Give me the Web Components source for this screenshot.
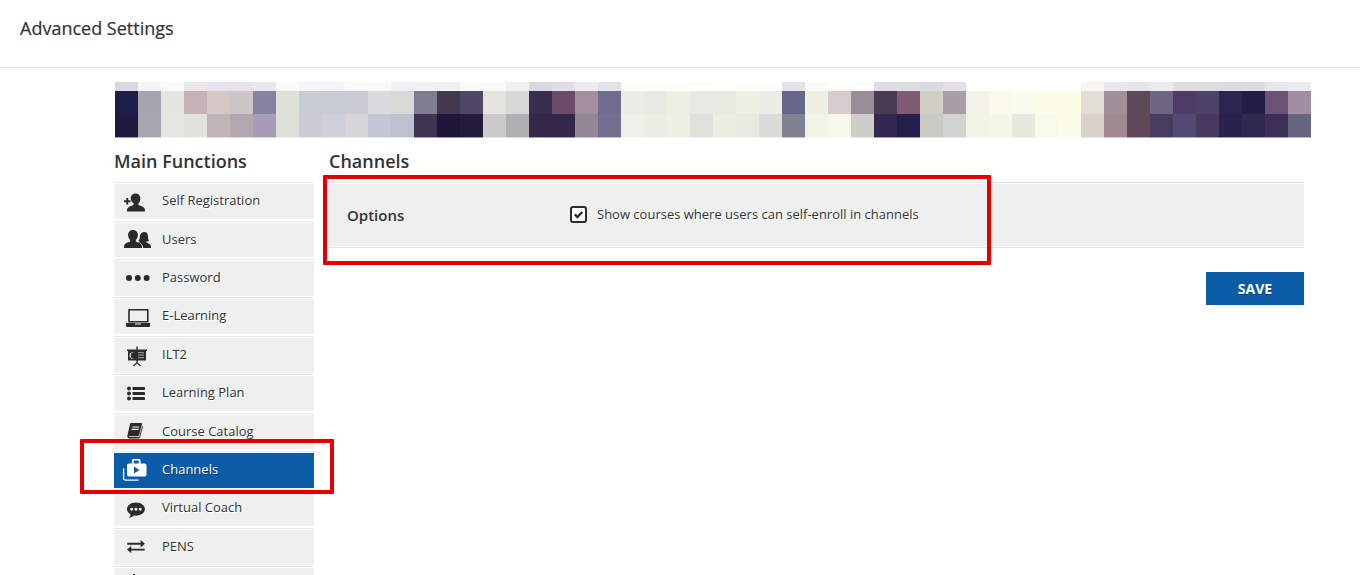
<!DOCTYPE html>
<html>
<head>
<meta charset="utf-8">
<title>Advanced Settings</title>
<style>
  html, body { margin: 0; padding: 0; background: #fff; }
  body { height: 575px; overflow: hidden; position: relative; font-family: "Open Sans", "Liberation Sans", sans-serif; color: #333; }
</style>
</head>
<body>

<page-header>Advanced Settings</page-header>
<mosaic-strip></mosaic-strip>
<settings-layout>
  <side-menu slot="side" heading="Main Functions">
    <menu-item icon="selfreg">Self Registration</menu-item>
    <menu-item icon="users">Users</menu-item>
    <menu-item icon="password">Password</menu-item>
    <menu-item icon="elearning">E-Learning</menu-item>
    <menu-item icon="ilt">ILT2</menu-item>
    <menu-item icon="plan">Learning Plan</menu-item>
    <menu-item icon="catalog">Course Catalog</menu-item>
    <menu-item icon="channels" active>Channels</menu-item>
    <menu-item icon="coach">Virtual Coach</menu-item>
    <menu-item icon="pens">PENS</menu-item>
    <menu-item icon="more"></menu-item>
  </side-menu>
  <channel-panel heading="Channels">
    <option-row label="Options">Show courses where users can self-enroll in channels</option-row>
    <save-button>SAVE</save-button>
  </channel-panel>
</settings-layout>
<red-mark style="left:323px;top:175px;width:668px;height:90px"></red-mark>
<red-mark style="left:80px;top:439px;width:254px;height:55px"></red-mark>

<script>
// 每个图标用 24x24 的 viewBox, 颜色走 currentColor
const ICONS = {
  selfreg: '<path d="M0 10.300h2.300V8h1.900v2.300h2.300v1.900H4.200v2.300H2.300v-2.300H0z"/><path d="M11.500 3.500c3 0 4.900 2.200 4.900 5 0 2.200-.9 3.900-2 4.800v1.700c1.900 1 6.600 1.300 6.600 5.300v1.200H3v-1.200c0-4 4.700-4.300 6.600-5.300v-1.700c-1.100-.9-2.900-2.600-2.900-4.800 0-2.800 1.800-5 4.800-5z"/>',
  users: '<path d="M9 2c3 0 4.900 2.200 4.900 5 0 2.200-.9 3.900-2 4.800v1.700c1.900 1 6.100 1.300 6.100 5.300V20H0v-1.200c0-4 4.200-4.300 6.100-5.300v-1.700c-1.100-.9-2-2.600-2-4.800C4.100 4.200 6 2 9 2z"/><path d="M20.300 4c2.500 0 3.700 1.900 3.700 4 0 2.500.4 3.900 1.200 4.700-.9.600-2 .8-2.900.9v.9c1.100.6 4.700 1.100 4.700 4.300V20h-7.800c-.1-3-2.300-5-4.600-6.100.4-.1.800-.2 1.200-.4V13.600c-.6-.1-1-.3-1.400-.6 1-1 1.500-2.900 1.500-5 .1-2.100 1.900-4 4.400-4z"/>',
  password: '<circle cx="5" cy="12" r="3"/><circle cx="13.800" cy="12" r="3"/><circle cx="22.600" cy="12" r="3"/>',
  elearning: '<path fill-rule="evenodd" d="M5 4h18.800c.5 0 .8.300.8.800V17.500H4.200V4.800c0-.5.300-.8.800-.8zm.8 1.500v10.500h17.200V5.500z"/><path d="M2 18h24.200v2.500c0 .9-.6 1.500-1.500 1.500H3.500C2.600 22 2 21.400 2 20.500zm9 .6v.9h6v-.9z"/>',
  ilt: '<path d="M12.300 3.500h1.400v3H23v1.500h-1v9.500H4V8H3V6.500h9.300z"/><path d="M12.300 17h1.400v2.400l3.800 3.600h-1.900l-2.600-2.500-2.600 2.500H8.500l3.800-3.600z"/><path fill="var(--item-bg)" d="M10 9.300a3.400 3.400 0 1 0 0 6.400 3 3 0 0 1 0-6.400z"/><path fill="var(--item-bg)" opacity=".5" d="M14 9h6v1.200h-6zM14 11.500h6v1.200h-6zM14 14h6v1.200h-6z"/>',
  plan: '<circle cx="5" cy="6.500" r="2"/><circle cx="5" cy="11.500" r="2"/><circle cx="5" cy="16.500" r="2"/><rect x="8.500" y="5.100" width="12.500" height="2.800" rx=".4"/><rect x="8.500" y="10.100" width="12.500" height="2.800" rx=".4"/><rect x="8.500" y="15.100" width="12.500" height="2.800" rx=".4"/>',
  catalog: '<g transform="translate(2.500 2.400) scale(.68)"><path fill-rule="evenodd" d="M7 1h14.500c1 0 1.500.8 1.200 1.800L18.600 19c-.3 1-1 1.500-2 1.500H4.300c-.9 0-1.200.8-.4 1.100h13.600c.8 0 1.400-.5 1.700-1.200l4-15.400.7.600c.4.400.4 1 .2 1.600L20 21.500c-.3 1.200-1.300 2-2.600 2H4.300c-2.200 0-3.600-1.700-3-3.800L5 3c.3-1.100 1-2 2-2zm1.500 5-.4 1.500h10.500L19 6zm-.9 3.500-.4 1.500h10.500l.4-1.500z"/></g>',
  channels: '<path fill-rule="evenodd" d="M9.500 1h5.500c1 0 1.600.6 1.600 1.500v3h3.900c1.200 0 2 .8 2 2v9c0 1.200-.8 2-2 2H5c-1.200 0-2-.8-2-2v-9c0-1.200.8-2 2-2h2.900v-3c0-.9.600-1.500 1.600-1.500zm.2 1.600v2.900h5.100V2.600zM10 8.500v7l5.500-3.500z"/><path fill="none" stroke="#fff" stroke-width="1.300" d="M-.4 10.500v9.800c0 1.200.7 1.800 1.700 1.800h13.200"/>',
  coach: '<g transform="translate(2.600 3.500) scale(.78)"><path fill-rule="evenodd" d="M12 2.500c6.400 0 11.500 3.700 11.500 8.500S18.400 19.500 12 19.500c-.9 0-1.800-.1-2.600-.2-1.700 1.700-3.900 2.600-6.400 2.900 1.200-1.400 2-2.800 2.200-4.300C2.300 16.400.5 13.900.5 11 .5 6.200 5.600 2.500 12 2.500zM6.500 9.300a1.900 1.900 0 1 0 0 3.800 1.900 1.900 0 0 0 0-3.800zm5.500 0a1.900 1.900 0 1 0 0 3.800 1.900 1.900 0 0 0 0-3.800zm5.500 0a1.900 1.900 0 1 0 0 3.800 1.900 1.900 0 0 0 0-3.800z"/></g>',
  pens: '<g transform="translate(2.600 2.300) scale(.78)"><path d="M.8 7h17.200V3.500L23.500 8.200 18 13V9.400H.8z"/><path d="M23.200 14.600H6V11L.5 15.800 6 20.500V17h17.200z"/></g>',
  more: '<path d="M9 0h2v2.500l2 1-1 1.500H8L7 3.500l2-1z"/>'
};

customElements.define('page-header', class extends HTMLElement {
  constructor() {
    super();
    this.attachShadow({ mode: 'open' }).innerHTML = `
      <style>
        :host { display: block; height: 67px; border-bottom: 1px solid #e4e4e4; }
        div { padding: 16px 0 0 20px; font-size: 18px; line-height: 24px; font-weight: 400; color: #333; -webkit-text-stroke: .2px #333; }
      </style>
      <div><slot></slot></div>`;
  }
});

customElements.define('mosaic-strip', class extends HTMLElement {
  constructor() {
    super();
    const rows = [
      'd8d7e3 f5f5f5 f9f9f7 e9e7ec e6e4ea e6e4ea e9e8ef fafaf8 f6f6f8 f4f5f7 f9f9f8 f8f9f8 f1f2f6 f1f1f4 f0f0f3 fafaf8 f9f9f7 f0f0f3 d8d8e2 e1dde4 eeecee e2e2ec fdfdfb fdfdfb fdfdfb fcfcfb fefefa fdfdfb fdfdfb e4e3ec fbfbf9 fefef8 fcfcfa dddbe4 e0dce4 dbdae0 e3e0e6 fefefa fefefa fefefa fefefa fefefa f7f6f5 eae8ea e6e4e8 ebeaef dfdde4 dfdde4 dcdbe4 dbdbe0 e7e6ea ecebee',
      '1e1c48 a5a5ad e5e6df c5b3b6 d3c8c6 cdc5c7 8582a2 dfe0da c8ccd4 c8cdd5 c9cad3 d8dcdc d8dad7 7f7d91 433850 4f4864 e5e5dd d8d8d8 3a2d52 6b4c68 a48f9f 6f6c90 ecede6 e8e9e3 edefe3 e8e9e3 e8e9e1 eef0e4 ecede5 666688 eff0e4 d9cccc 9a8e9b 4a3b55 7f5c72 d0cec6 a89fa8 f2f2e8 f9faec fbfdee fdfeea fdfee8 e2ddd7 a38f97 5d4859 6e6583 4f3c66 4b4468 2b2650 211c48 6a5277 a28ea2',
      '1f1a3e a7a7b0 e6e7e1 e2e3db c0b4b8 b3a8b0 aa9cb4 dddfd9 cbccd6 cdcfd9 d6d6d8 c3c7d4 bdc2ce 3f3452 1e1538 241a3c cbc9ca b0afb2 35274a 35274a 948796 73708f eef1e8 ebeee5 eef0e3 dfe2dc ebeee0 e8eae0 dadcd9 808193 f3f4e8 f6f8ea cdcdcb 332650 261f4e c8cac4 d3d3cf f2f4e6 f4f6e8 e7e9df f9fbea fbfce9 d8d1cb 9f8a92 5f4659 483b62 524a72 49395f 2a2150 30284f 3c2f58 676480'
    ];
    let cells = rows.map(r => r.split(' ').map(c => `<i style="background:#${c}"></i>`).join('')).join('');
    // 最下面还有 1px 的残边
    cells += rows[2].split(' ').map(c => `<i style="background:#${c};opacity:.45"></i>`).join('');
    this.attachShadow({ mode: 'open' }).innerHTML = `
      <style>
        :host { display: grid; grid-template-columns: repeat(52, 23px); grid-template-rows: 9px 23px 23px 1px; margin: 14px 0 0 115px; width: 1196px; }
      </style>
      ${cells}`;
  }
});

customElements.define('settings-layout', class extends HTMLElement {
  constructor() {
    super();
    this.attachShadow({ mode: 'open' }).innerHTML = `
      <style>
        :host { display: flex; gap: 15px; margin: 11px 0 0 114px; width: 1190px; height: 426px; overflow: hidden; }
        ::slotted([slot=side]) { flex: 0 0 200px; }
      </style>
      <slot name="side"></slot>
      <slot></slot>`;
  }
});

customElements.define('side-menu', class extends HTMLElement {
  constructor() {
    super();
    const shadow = this.attachShadow({ mode: 'open' });
    shadow.innerHTML = `
      <style>
        :host { display: block; }
        h2 { margin: 0 0 9.300px; font-size: 18px; line-height: 24px; font-weight: 600; color: #333; }
      </style>
      <h2></h2>
      <slot></slot>`;
    shadow.querySelector('h2').textContent = this.getAttribute('heading');
  }
});

customElements.define('menu-item', class extends HTMLElement {
  static get observedAttributes() {
    return ['icon'];
  }
  constructor() {
    super();
    this.attachShadow({ mode: 'open' }).innerHTML = `
      <style>
        :host { display: block; height: 38.400px; box-sizing: border-box; padding: 1px 0 1.600px; border-top: 1px solid #e6e6e6; --item-bg: #eef0ef; }
        .row { display: flex; align-items: center; height: 100%; background: var(--item-bg); color: #333; font-size: 13px; text-shadow: 1px 1px 0 #fff; }
        svg { width: 24px; height: 24px; margin-left: 10px; margin-right: 14px; fill: #2b2b2b; flex: none; overflow: visible; }
        span { margin-top: -3px; }
        :host([active]) { --item-bg: #0a5ca6; }
        :host([active]) .row { color: #fff; text-shadow: 1px 1px 0 rgba(0,0,0,.45); }
        :host([active]) svg { fill: #fff; }
      </style>
      <div class="row"><svg viewBox="0 0 24 24"></svg><span><slot></slot></span></div>`;
  }
  attributeChangedCallback(name, oldValue, newValue) {
    this.shadowRoot.querySelector('svg').innerHTML = ICONS[newValue] || '';
  }
});

customElements.define('channel-panel', class extends HTMLElement {
  constructor() {
    super();
    const shadow = this.attachShadow({ mode: 'open' });
    shadow.innerHTML = `
      <style>
        :host { display: block; flex: 1; }
        h2 { margin: 0 0 9px; font-size: 18px; line-height: 24px; font-weight: 600; color: #333; }
      </style>
      <h2></h2>
      <slot></slot>`;
    shadow.querySelector('h2').textContent = this.getAttribute('heading');
  }
});

customElements.define('option-row', class extends HTMLElement {
  constructor() {
    super();
    const shadow = this.attachShadow({ mode: 'open' });
    shadow.innerHTML = `
      <style>
        :host { display: flex; align-items: center; height: 66px; box-sizing: border-box; border-top: 1px solid #e0e0e0; border-bottom: 1px solid #e0e0e0; }
        .in { flex: 1; display: flex; align-items: center; height: 62px; background: #eef0ef; }
        b { width: 241px; padding-left: 18px; box-sizing: border-box; flex: none; font-size: 15px; font-weight: 600; color: #333; }
        svg { width: 17px; height: 17px; flex: none; margin-right: 10px; margin-top: -1px; }
        span { font-size: 13px; color: #333; margin-top: -2px; text-shadow: 1px 1px 0 #fff; }
      </style>
      <div class="in">
        <b></b>
        <svg viewBox="0 0 17 17"><rect x="1" y="1" width="15" height="15" rx="2" fill="#fff" stroke="#2b2b2b" stroke-width="2"/><path d="M4.800 8.400l2.600 2.600 4.900-5" fill="none" stroke="#2b2b2b" stroke-width="2.300"/></svg>
        <span><slot></slot></span>
      </div>`;
    shadow.querySelector('b').textContent = this.getAttribute('label');
  }
});

customElements.define('save-button', class extends HTMLElement {
  constructor() {
    super();
    this.attachShadow({ mode: 'open' }).innerHTML = `
      <style>
        :host { display: flex; justify-content: flex-end; margin-top: 24px; }
        button { width: 98px; height: 33px; border: 0; padding: 0; background: #0a5ca6; color: #fff; font: 700 14px "Open Sans", "Liberation Sans", sans-serif; text-shadow: 0 1px 0 rgba(0,0,0,.3); }
      </style>
      <button><slot></slot></button>`;
  }
});

// 截图上的红色标注框, 盖在内容上面
customElements.define('red-mark', class extends HTMLElement {
  constructor() {
    super();
    this.attachShadow({ mode: 'open' }).innerHTML = `
      <style>
        :host { display: block; position: absolute; box-sizing: border-box; border: 4px solid #e30000; border-radius: 1px; pointer-events: none; }
      </style>`;
  }
});
</script>
</body>
</html>
